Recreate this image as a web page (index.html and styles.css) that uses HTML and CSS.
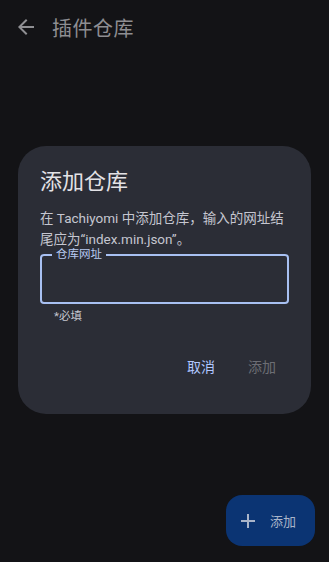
FILE: index.html
```html
<!doctype html>
<html lang="zh-CN">
<head>
  <meta charset="utf-8" />
  <meta name="viewport" content="width=device-width,initial-scale=1" />
  <title>插件仓库</title>
  <link rel="stylesheet" href="styles.css">
</head>
<body>
  <div class="screen">
    <header class="topbar">
      <button class="icon-btn" aria-label="返回">
        <svg width="24" height="24" viewBox="0 0 24 24"><path d="M20 11H7.83l5.59-5.59L12 4l-8 8 8 8 1.41-1.41L7.83 13H20v-2z" fill="currentColor"/></svg>
      </button>
      <h1>插件仓库</h1>
    </header>

    <button class="fab">
      <svg width="24" height="24" viewBox="0 0 24 24"><path d="M19 13h-6v6h-2v-6H5v-2h6V5h2v6h6v2z" fill="currentColor"/></svg>
      <span>添加</span>
    </button>

    <div class="scrim">
      <div class="dialog" role="dialog">
        <h2>添加仓库</h2>
        <p class="desc">在 Tachiyomi 中添加仓库，输入的网址结尾应为“index.min.json”。</p>
        <div class="field">
          <span class="field-label">仓库网址</span>
          <input type="text" aria-label="仓库网址">
        </div>
        <div class="helper">*必填</div>
        <div class="actions">
          <button class="text-btn">取消</button>
          <button class="text-btn" disabled>添加</button>
        </div>
      </div>
    </div>
  </div>
</body>
</html>
```

FILE: styles.css
```css
:root{
  --bg:#131316;
  --surface:#2b2d36;
  --on-surface:#e3e2e6;
  --on-variant:#c5c6d0;
  --primary:#b0c6ff;
  --fab:#0b3473;
}
*{box-sizing:border-box}
html,body{height:100%}
body{
  margin:0;
  background:var(--bg);
  font-family:Roboto,"Noto Sans CJK SC",sans-serif;
  color:var(--on-surface);
}
button{font-family:inherit;border:0;background:none;cursor:pointer;padding:0}

.screen{
  position:relative;
  height:100%;
  overflow:hidden;
}

.topbar{
  display:flex;
  align-items:center;
  height:54px;
  padding:0 0 0 14px;
  gap:14px;
}
.icon-btn{color:#8f8f93;display:flex;width:24px;height:24px}
.topbar h1{
  margin:0;
  font-size:20px;
  font-weight:400;
  color:#8e8e92;
  letter-spacing:0.5px;
}

.fab{
  position:absolute;
  right:14px;
  bottom:16px;
  height:51px;
  width:89px;
  border-radius:16px;
  background:var(--fab);
  color:#a9b4c9;
  display:flex;
  align-items:center;
  gap:10px;
  padding:0 0 0 10px;
  font-size:13px;
}

.scrim{
  position:absolute;
  inset:0;
  display:flex;
  align-items:center;
  justify-content:center;
  padding-bottom:3px;
}

.dialog{
  width:293px;
  background:var(--surface);
  border-radius:28px;
  padding:21px 22px 37px;
}
.dialog h2{
  margin:0 0 11px;
  font-size:22px;
  font-weight:400;
  line-height:30px;
  color:var(--on-surface);
}
.desc{
  margin:0;
  font-size:13.5px;
  line-height:21px;
  color:var(--on-variant);
}

.field{
  position:relative;
  margin-top:4px;
  height:50px;
  border:2px solid #a8c0f2;
  border-radius:4px;
}
.field input{
  width:100%;
  height:100%;
  background:transparent;
  border:0;
  outline:0;
  color:var(--on-surface);
  font-size:16px;
  padding:0 14px;
}
.field-label{
  position:absolute;
  left:10px;
  top:-9px;
  padding:0 4px;
  background:var(--surface);
  font-size:11.5px;
  line-height:14px;
  color:#b8cbf2;
}
.helper{
  margin:5px 0 0 14px;
  font-size:11.5px;
  line-height:14px;
  color:var(--on-variant);
}

.actions{
  display:flex;
  justify-content:flex-end;
  gap:33px;
  margin-top:34px;
  padding-right:13px;
}
.text-btn{
  font-size:14px;
  line-height:20px;
  color:var(--primary);
}
.text-btn:disabled{color:#6c6d74;cursor:default}
```
